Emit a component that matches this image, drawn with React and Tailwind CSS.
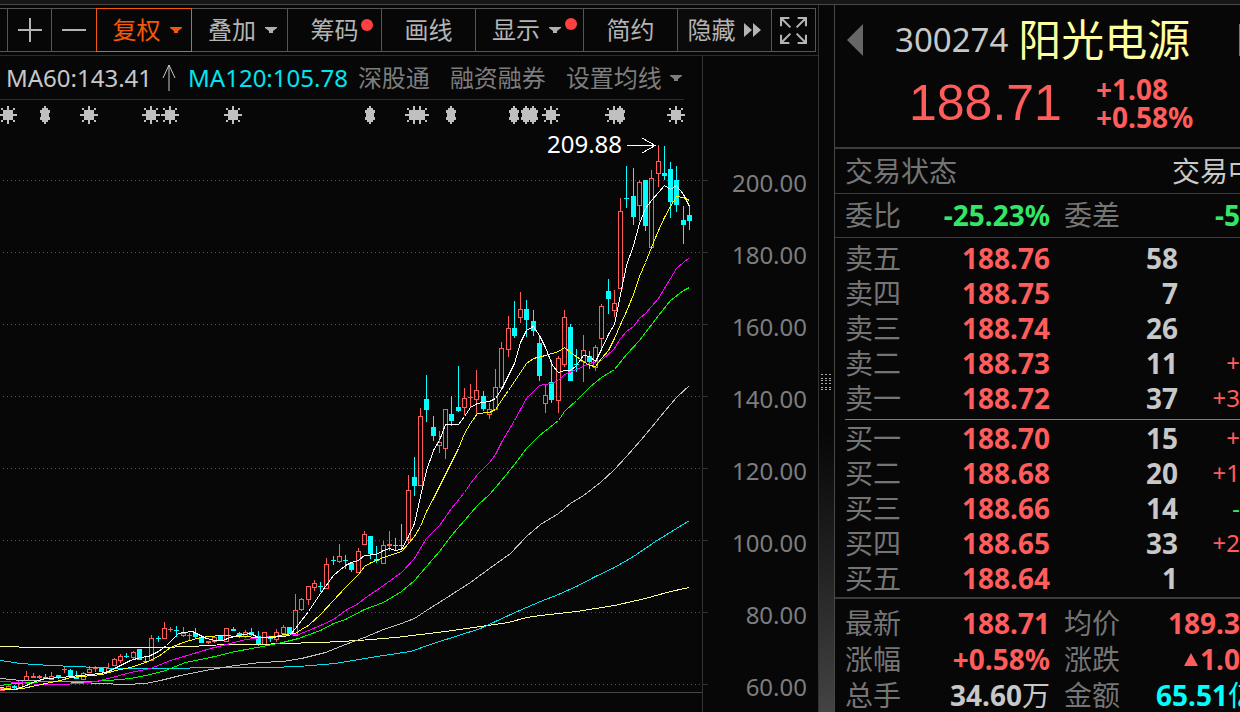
import React from 'react';

const UP = '#ff5c5c';
const DOWN = '#00ffff';

// [x, high, top, bottom, low, rising]
const candles = [
  [2, 687, 688, 690, 691, 1], [8, 685, 686, 688, 688, 1], [14, 685, 686, 688, 690, 0], [20, 680, 680, 688, 688, 1],
  [26, 671, 676, 680, 680, 1], [33, 673, 676, 677, 678, 1], [39, 675, 676, 677, 679, 1], [45, 674, 677, 678, 678, 0],
  [51, 672, 676, 679, 680, 1], [58, 675, 675, 677, 679, 0], [64, 667, 669, 669, 673, 1], [70, 669, 670, 677, 677, 0],
  [76, 671, 677, 678, 678, 0], [83, 672, 673, 679, 679, 1], [89, 666, 669, 672, 673, 1], [95, 666, 668, 668, 672, 1],
  [101, 667, 667, 672, 672, 0], [108, 663, 668, 672, 672, 1], [114, 658, 659, 665, 665, 1], [120, 654, 656, 660, 663, 1],
  [126, 653, 656, 656, 658, 0], [133, 651, 652, 657, 660, 1], [139, 649, 649, 660, 660, 0], [145, 657, 661, 661, 662, 0],
  [151, 635, 638, 660, 661, 1], [158, 636, 638, 638, 642, 0], [164, 622, 628, 638, 639, 1], [170, 627, 629, 629, 632, 1],
  [176, 626, 630, 630, 637, 0], [183, 627, 633, 635, 637, 1], [189, 633, 635, 635, 640, 1], [195, 628, 633, 637, 639, 0],
  [201, 637, 637, 643, 643, 0], [208, 641, 641, 642, 644, 1], [214, 636, 637, 641, 643, 1], [220, 636, 636, 641, 641, 0],
  [226, 628, 628, 641, 641, 1], [233, 627, 629, 631, 631, 0], [239, 632, 633, 636, 638, 0], [245, 630, 632, 636, 638, 1],
  [251, 628, 632, 635, 636, 0], [258, 631, 636, 644, 646, 0], [264, 632, 632, 644, 644, 1], [270, 636, 637, 638, 642, 0],
  [276, 629, 632, 639, 642, 1], [283, 625, 627, 633, 634, 1], [289, 627, 627, 634, 634, 0], [295, 594, 610, 635, 636, 1],
  [301, 598, 599, 609, 611, 1], [308, 586, 586, 599, 605, 1], [314, 580, 583, 587, 591, 1], [320, 582, 586, 586, 592, 0],
  [326, 558, 564, 588, 588, 1], [333, 556, 560, 560, 565, 0], [339, 544, 556, 561, 563, 1], [345, 555, 560, 560, 569, 0],
  [351, 562, 563, 570, 572, 0], [358, 548, 551, 572, 572, 1], [364, 531, 534, 544, 544, 1], [370, 536, 536, 554, 559, 0],
  [376, 546, 559, 561, 563, 0], [383, 541, 545, 563, 563, 1], [389, 531, 544, 545, 551, 1], [395, 538, 545, 545, 550, 0],
  [401, 524, 545, 545, 549, 0], [408, 475, 490, 539, 543, 1], [414, 457, 477, 486, 496, 0], [420, 408, 416, 485, 485, 1],
  [426, 375, 399, 410, 422, 0], [433, 416, 427, 436, 441, 0], [439, 431, 442, 445, 453, 1], [445, 409, 409, 448, 459, 1],
  [451, 396, 414, 421, 426, 0], [458, 366, 407, 411, 412, 0], [464, 388, 398, 407, 415, 1], [470, 384, 397, 397, 407, 1],
  [476, 370, 390, 399, 415, 1], [483, 391, 396, 409, 411, 0], [489, 403, 409, 414, 419, 1], [495, 369, 387, 409, 409, 1],
  [501, 342, 348, 387, 390, 1], [508, 316, 328, 349, 357, 1], [514, 301, 328, 336, 338, 0], [520, 292, 309, 317, 323, 1],
  [526, 300, 309, 320, 337, 0], [533, 310, 321, 331, 336, 0], [539, 335, 343, 376, 381, 0], [545, 384, 395, 403, 413, 1],
  [551, 360, 382, 400, 403, 0], [558, 356, 358, 400, 413, 1], [564, 310, 317, 364, 367, 1], [570, 324, 327, 381, 381, 0],
  [576, 349, 364, 364, 372, 0], [583, 335, 350, 361, 382, 1], [589, 351, 356, 362, 369, 0], [595, 345, 347, 367, 371, 1],
  [601, 304, 306, 338, 348, 1], [608, 279, 291, 299, 314, 0], [614, 290, 303, 310, 317, 1], [620, 198, 211, 288, 288, 1],
  [626, 166, 198, 198, 208, 0], [633, 168, 196, 217, 225, 0], [639, 180, 182, 205, 221, 1], [645, 180, 180, 226, 231, 0],
  [651, 170, 178, 247, 247, 1], [658, 145, 161, 173, 187, 1], [664, 146, 173, 176, 180, 0], [670, 162, 169, 202, 218, 0],
  [676, 166, 180, 205, 212, 0], [683, 206, 220, 225, 244, 0], [689, 205, 215, 221, 230, 0],
];

const averages = [
  {
    color: '#ffff99',
    points: '0,646 36,647 160,647 190,646 225,644 260,644 282,643 320,642 358,640 395,637 420,634 445,631 480,626 508,622 526,617 540,615 576,611 614,605 645,598 670,591 689,587',
  },
  {
    color: '#00e5ee',
    points: '0,660 20,663 50,665 75,666 95,667 120,668 180,668 200,667 270,667 298,666 335,663 364,658 383,655 410,651 433,643 458,635 480,628 508,615 526,607 540,601 558,594 576,586 595,576 614,567 633,556 655,541 676,528 689,520',
  },
  {
    color: '#c0c0c0',
    points: '0,678 20,680 60,681 100,683 125,684 145,683 160,680 180,675 210,669 235,665 260,662 282,661 301,658 325,652 345,644 364,637 383,629 401,623 414,618 426,610 445,598 470,582 489,568 510,553 526,536 540,524 558,513 570,503 583,495 600,482 614,469 626,456 640,440 651,427 664,411 676,397 689,385',
  },
  {
    color: '#00ff00',
    points: '0,685 14,683 30,682 45,681 90,681 108,680 130,678 150,674 165,670 185,662 210,657 235,651 262,646 282,642 298,638 320,630 333,623 345,619 364,609 383,602 401,591 414,580 426,566 439,551 451,535 464,520 477,505 489,494 501,480 514,464 526,448 539,435 558,420 564,411 576,400 589,387 601,377 614,369 626,354 639,340 658,315 670,300 683,290 689,287',
  },
  {
    color: '#ff00ff',
    points: '0,681 20,682 38,684 60,684 80,683 95,681 108,678 130,672 150,668 170,660 190,654 210,648 230,643 245,639 262,637 282,635 298,634 308,630 320,625 333,619 345,610 358,603 364,598 383,585 401,572 414,558 420,548 426,538 439,525 451,508 464,492 470,483 477,474 489,462 495,454 501,442 514,420 526,398 539,385 551,383 558,380 564,374 576,369 589,363 601,360 614,348 620,338 626,331 633,326 639,318 645,313 658,298 664,288 676,268 683,262 689,257',
  },
  {
    color: '#ffff00',
    points: '0,687 14,689 22,688 36,685 50,682 60,680 70,677 82,676 102,674 115,670 130,667 145,662 158,656 170,647 183,642 196,638 208,636 222,635 238,636 262,637 276,636 283,634 295,633 301,629 308,625 320,614 333,600 345,587 358,574 364,566 371,562 383,557 401,551 408,543 414,536 420,526 426,511 433,498 439,486 445,474 458,448 464,433 470,423 477,413 489,412 495,409 501,400 508,390 520,372 526,363 533,358 545,355 558,351 564,347 570,352 583,361 589,365 595,366 601,358 608,350 614,338 620,324 626,311 633,294 639,276 645,262 651,247 658,230 664,217 670,206 676,196 683,197 689,200',
  },
  {
    color: '#ffffff',
    points: '0,689 14,689 26,685 32,682 38,680 45,678 62,677 70,676 90,674 100,673 108,671 120,665 130,660 140,657 148,656 158,651 166,645 178,633 184,632 192,631 200,635 206,638 215,640 222,640 230,637 238,635 250,633 258,637 270,637 282,636 289,635 295,628 308,611 320,593 333,575 345,565 351,562 358,560 364,555 376,554 383,550 389,548 395,550 401,549 408,536 414,523 420,496 426,470 433,450 439,440 445,424 458,424 464,416 470,407 477,403 489,401 495,398 501,389 508,375 514,363 520,342 526,330 533,326 539,335 545,347 552,365 558,372 564,370 570,370 576,365 583,355 589,356 595,361 601,349 608,334 614,324 620,294 626,265 633,245 639,223 645,208 651,200 658,192 664,185 670,189 676,185 683,194 689,206',
  },
];

const gridLines = [180, 252, 324, 396, 468, 540, 612, 684];
const priceScale = ['200.00', '180.00', '160.00', '140.00', '120.00', '100.00', '80.00', '60.00'];

const starMarks = [8, 89, 151, 170, 233, 414, 420, 551, 614, 676];
const barMarks = [45, 370, 451, 514, 526, 533, 620];

const sells = [
  ['卖五', '188.76', '58', ''],
  ['卖四', '188.75', '7', ''],
  ['卖三', '188.74', '26', ''],
  ['卖二', '188.73', '11', '+'],
  ['卖一', '188.72', '37', '+3'],
];

const buys = [
  ['买一', '188.70', '15', '+'],
  ['买二', '188.68', '20', '+1'],
  ['买三', '188.66', '14', '-'],
  ['买四', '188.65', '33', '+2'],
  ['买五', '188.64', '1', ''],
];

const Caret = ({ className = 'text-[#b0b0b0]' }) => (
  <svg width="12" height="8" viewBox="0 0 12 8" fill="currentColor" className={className}>
    <path d="M0 1h12v1l-4 3v2H4V5L0 2z" />
  </svg>
);

const Dot = ({ className }) => <span className={`absolute size-3 rounded-full bg-[#ff4040] ${className}`} />;

const Toolbar = () => (
  <div className="flex h-11 mt-[3px] mr-[2px] border-y border-[#555] text-2xl text-[#b4b4b4] whitespace-nowrap">
    <div className="w-2 shrink-0 border-r border-[#555]" />
    <button aria-label="放大" className="w-11 shrink-0 border-r border-[#555] flex items-center justify-center">
      <svg width="24" height="24" stroke="currentColor" strokeWidth="2">
        <path d="M0 12h24M12 0v24" />
      </svg>
    </button>
    <button aria-label="缩小" className="w-11 shrink-0 flex items-center justify-center">
      <svg width="24" height="24" stroke="currentColor" strokeWidth="2">
        <path d="M0 12h24" />
      </svg>
    </button>
    <button className="w-24 -my-px shrink-0 border border-[#f25a0a] text-[#f25a0a] flex items-center justify-center gap-[9px] pl-[6px]">
      复权
      <Caret className="text-[#f25a0a]" />
    </button>
    <button className="w-24 grow border-r border-[#555] flex items-center justify-center gap-[9px] pl-[6px]">
      叠加
      <Caret />
    </button>
    <button className="relative w-[94px] shrink-0 border-r border-[#555]">
      筹码
      <Dot className="right-2 top-[10px]" />
    </button>
    <button className="w-[94px] shrink-0 border-r border-[#555]">画线</button>
    <button className="relative w-[108px] shrink-0 border-r border-[#555] flex items-center gap-[9px] pl-4">
      显示
      <Caret />
      <Dot className="right-[6px] top-[9px]" />
    </button>
    <button className="w-[94px] shrink-0 border-r border-[#555]">简约</button>
    <button className="w-[94px] shrink-0 border-r border-[#555] bg-[#0b0b0b] flex items-center justify-center gap-2">
      隐藏
      <svg width="18" height="14" viewBox="0 0 18 14" fill="currentColor">
        <path d="M0 0l8 7-8 7zM9 0l8 7-8 7z" />
      </svg>
    </button>
    <button aria-label="全屏" className="w-11 shrink-0 border-r border-[#555] flex items-center justify-center">
      <svg width="27" height="27" viewBox="0 0 26 26" fill="none" stroke="currentColor" strokeWidth="2">
        <path d="M1 9V1h8M1 1l9 9M17 1h8v8M25 1l-9 9M1 17v8h8M1 25l9-9M25 17v8h-8M25 25l-9-9" />
      </svg>
    </button>
  </div>
);

const Candle = ({ data }) => {
  const [x, high, top, bottom, low, rising] = data;
  const color = rising ? UP : DOWN;
  if (bottom - top < 2) {
    return (
      <g fill={color}>
        <rect x={x} y={high} width="1" height={low - high} />
        <rect x={x - 2} y={top} width="5" height={bottom - top + 1} />
      </g>
    );
  }
  return (
    <g fill={color}>
      <rect x={x} y={high} width="1" height={Math.max(top - high, 0)} />
      <rect x={x} y={bottom} width="1" height={Math.max(low - bottom, 0)} />
      {rising ? (
        <rect x={x - 1.5} y={top + 0.5} width="4" height={bottom - top} fill="none" stroke={color} />
      ) : (
        <rect x={x - 2} y={top} width="5" height={bottom - top} />
      )}
    </g>
  );
};

const KLineChart = () => (
  <svg
    viewBox="0 100 702 612"
    preserveAspectRatio="xMaxYMin meet"
    className="block w-full h-[612px] overflow-visible"
    shapeRendering="crispEdges"
  >
    {gridLines.map((y) => (
      <g key={y}>
        <path d={`M3 ${y}.5H700`} stroke="#555" strokeDasharray="1 3" />
        <path d={`M703 ${y}.5h5`} stroke="#333" />
      </g>
    ))}
    <path d="M0 692.5H702" stroke="#484848" />

    {/* event markers */}
    <g fill="#c0c0c0">
      {starMarks.map((x) => (
        <path
          key={x}
          transform={`translate(${x} 115)`}
          d="M-5-5H5V5H-5zM-1-9h2V9h-2zM-9-1H9v2H-9zM-7-7h2v2h-2zM5-7h2v2h-2zM-7 5h2v2h-2zM5 5h2v2h-2z"
        />
      ))}
      {barMarks.map((x) => (
        <path
          key={x}
          transform={`translate(${x} 115)`}
          d="M-1-9h2v2h2v2h2v3h-1v4h1v3h-2v2h-2v2h-2v-2h-2v-2h-2v-3h1v-4h-1v-3h2v-2h2z"
        />
      ))}
    </g>

    {candles.map((c) => (
      <Candle key={c[0]} data={c} />
    ))}
    {averages.map((a) => (
      <polyline key={a.color} points={a.points} transform="translate(0.5 0.5)" fill="none" stroke={a.color} />
    ))}

    <text x="547" y="153" fontSize="24" fill="#fff">209.88</text>
    <path d="M627 145.5h28M642 138l13 7.5L642 153" stroke="#fff" fill="none" />
  </svg>
);

const BookRows = ({ rows }) => (
  <table className="w-full table-fixed border-collapse">
    <tbody>
      {rows.map(([name, price, volume, change]) => (
        <tr key={name} className="h-[35px]">
          <th className="w-[77px] p-0 text-left font-normal text-[#757575]">{name}</th>
          <td className="w-[128px] p-0 text-right font-bold text-[#ff5c5c]">{price}</td>
          <td className="w-[128px] p-0 text-right font-bold text-[#c8c8c8]">{volume}</td>
          <td className={`p-0 text-right text-2xl ${change === '-' ? 'text-[#33e666]' : 'text-[#ff5c5c]'}`}>
            {change}
          </td>
        </tr>
      ))}
    </tbody>
  </table>
);

const labelCell = 'w-[77px] p-0 text-left font-normal text-[#757575]';

const QuotePanel = () => (
  <aside className="w-[406px] shrink-0 overflow-hidden border-l border-[#484848] text-[28px] leading-[34px] whitespace-nowrap">
    <header className="h-36 border-b-2 border-[#3c3c3c]">
      <div className="flex items-center h-[70px] pl-3">
        <button aria-label="上一只" className="text-[#666]">
          <svg width="16" height="32" viewBox="0 0 16 32" fill="currentColor">
            <path d="M16 0v32L0 16z" />
          </svg>
        </button>
        <span className="ml-8 text-[33px] text-[#c8c8c8]">300274</span>
        <h1 className="ml-[10px] text-[43px] text-[#ffffa0]">阳光电源</h1>
        <span className="ml-auto w-px h-8 bg-[#777]" />
      </div>
      <div className="flex items-center h-14 pl-[74px] text-[#ff5c5c]">
        <strong className="w-[187px] font-['Liberation_Sans'] font-normal text-[50px]">188.71</strong>
        <div className="font-bold leading-7">
          <p>+1.08</p>
          <p>+0.58%</p>
        </div>
      </div>
    </header>

    <div className="flex items-center h-[45px] pl-[10px] border-b border-[#3c3c3c]">
      <span className="text-[#757575]">交易状态</span>
      <span className="ml-auto -mr-4 text-[#c8c8c8]">交易中</span>
    </div>

    <div className="h-11 pl-[10px] pt-[3px] border-b border-[#3c3c3c]">
      <table className="w-full table-fixed border-collapse">
        <tbody>
          <tr className="h-[35px]">
            <th className={labelCell}>委比</th>
            <td className="w-[128px] p-0 text-right font-bold text-[#33e666]">-25.23%</td>
            <th className="w-[91px] p-0 pl-[14px] text-left font-normal text-[#757575]">委差</th>
            <td className="p-0 text-right font-bold text-[#33e666]">-5</td>
          </tr>
        </tbody>
      </table>
    </div>

    <div className="ml-[10px] pt-[2px] pb-1 border-b border-[#7d7d7d]">
      <BookRows rows={sells} />
    </div>
    <div className="pl-[10px] pb-[2px] border-b-2 border-[#3c3c3c]">
      <BookRows rows={buys} />
    </div>

    <div className="pl-[10px] pt-[6px]">
      <table className="w-full table-fixed border-collapse">
        <tbody>
          <tr className="h-9">
            <th className={labelCell}>最新</th>
            <td className="w-[128px] p-0 text-right font-bold text-[#ff5c5c]">188.71</td>
            <th className="w-[77px] p-0 pl-[14px] text-left font-normal text-[#757575]">均价</th>
            <td className="p-0 text-right font-bold text-[#ff5c5c]">189.3</td>
          </tr>
          <tr className="h-9">
            <th className={labelCell}>涨幅</th>
            <td className="p-0 text-right font-bold text-[#ff5c5c]">+0.58%</td>
            <th className="p-0 pl-[14px] text-left font-normal text-[#757575]">涨跌</th>
            <td className="p-0 font-bold text-[#ff5c5c]">
              <div className="flex items-center justify-end gap-[2px]">
                <svg width="14" height="13" viewBox="0 0 14 13" fill="currentColor">
                  <path d="M7 0l7 13H0z" />
                </svg>
                1.0
              </div>
            </td>
          </tr>
          <tr className="h-9">
            <th className={labelCell}>总手</th>
            <td className="p-0 text-right font-bold text-[#c8c8c8]">
              34.60<span className="font-normal">万</span>
            </td>
            <th className="p-0 pl-[14px] text-left font-normal text-[#757575]">金额</th>
            <td className="p-0 font-bold text-[#00ffff]">
              <div className="flex justify-end -mr-4">
                65.51<span className="font-normal">亿</span>
              </div>
            </td>
          </tr>
        </tbody>
      </table>
    </div>
  </aside>
);

const App = () => {
  return (
    <div className="min-h-screen flex flex-col overflow-hidden bg-[#070707] font-['Noto_Sans','Noto_Sans_CJK_SC',sans-serif]">
      <div className="h-[5px] bg-[#161616] border-b border-[#484848]" />
      <div className="flex flex-1">
        <main className="flex-1 min-w-0 border-r border-[#333]">
          <Toolbar />
          <div className="mt-[3px] flex border-t border-[#2c2c2c]">
            <div className="flex-1 min-w-0">
              <div className="flex items-center h-11 mr-[18px] pl-[6px] border-b border-[#2c2c2c] text-2xl text-[#7d7d7d] whitespace-nowrap">
                <span className="text-[#c8c8c8]">MA60:143.41</span>
                <svg width="14" height="28" viewBox="0 0 14 28" fill="none" stroke="#c8c8c8" className="ml-[10px] mr-2 shrink-0">
                  <path d="M7 1v26M1 14L7 1l6 13" />
                </svg>
                <span className="ml-1 text-[#00e5ee]">MA120:105.78</span>
                <span className="ml-[10px]">深股通</span>
                <span className="ml-5">融资融券</span>
                <button className="ml-5 flex items-center gap-2">
                  设置均线
                  <Caret className="text-[#7d7d7d]" />
                </button>
              </div>
              <KLineChart />
            </div>
            <ol className="w-[116px] shrink-0 flex flex-col gap-12 pt-[115px] pr-[11px] border-l border-[#333] text-right text-2xl leading-6 text-[#7d7d7d]">
              {priceScale.map((p) => (
                <li key={p} className="h-6">{p}</li>
              ))}
            </ol>
          </div>
        </main>

        {/* splitter */}
        <div className="w-[15px] shrink-0 flex justify-center bg-linear-to-b from-[#070707] from-60% to-[#444]">
          <svg width="11" height="17" viewBox="0 0 11 17" fill="#aaa" className="mt-[369px]">
            {[0, 4, 8].map((x) =>
              [0, 4, 6, 9, 13, 15].map((y) => <rect key={`${x}-${y}`} x={x} y={y} width="2" height="1" />)
            )}
          </svg>
        </div>

        <QuotePanel />
      </div>
    </div>
  );
};

export default App;
